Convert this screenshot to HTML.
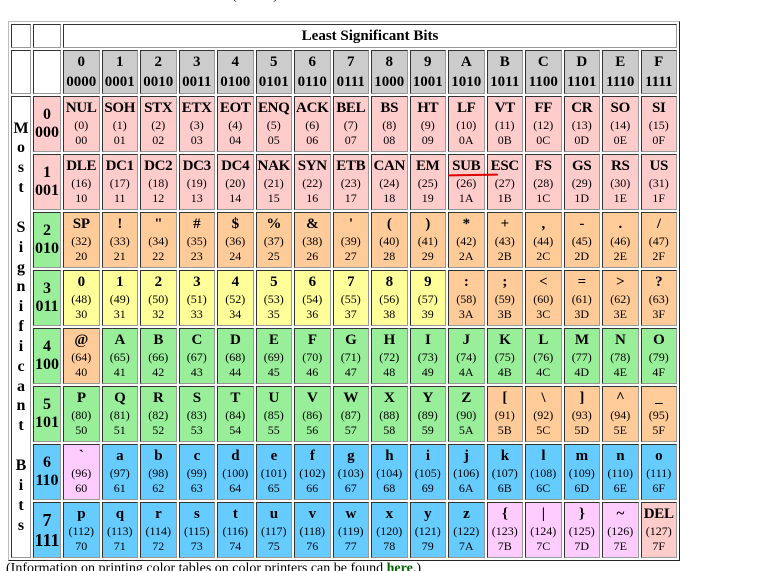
<!DOCTYPE html>
<html><head><meta charset="utf-8"><style>
html,body{margin:0;padding:0;background:#fff;width:769px;height:571px;overflow:hidden;position:relative;font-family:"Liberation Serif",serif;color:#000}
table{position:absolute;left:8px;top:21px;border-collapse:separate;border-spacing:2px;table-layout:fixed;border:1px solid;border-color:#bbb #222 #222 #bbb}
td{border:1px solid;border-color:#333 #999 #999 #333;padding:0;text-align:center;overflow:hidden;white-space:nowrap}
td.d{vertical-align:top;padding-top:2px;font-size:12px;line-height:15px;height:52px}
td.d b{display:block;font-size:15px;line-height:19px;letter-spacing:-0.3px}
td.h{background:#ccc;font-weight:bold;font-size:15px;line-height:20px;height:42px}
td.r{font-weight:bold;font-size:16px;line-height:18px}
td.m{font-weight:bold;font-size:16px;line-height:19.85px;vertical-align:middle}
.p{background:#ffcccc}.o{background:#fc9}.y{background:#ff9}.g{background:#99ee99}.b{background:#6cf}.l{background:#fcf}
#u{position:absolute;left:448px;top:174px;width:50px;height:2px;background:#d00;border-radius:1px;transform:rotate(-1deg)}
#f{position:absolute;left:6px;top:561px;font-size:14px;white-space:nowrap}
#f b{color:#060}
#t{position:absolute;left:232px;top:-12px;font-size:14px}
</style></head><body>
<div id="t">(ASCII)</div>
<table>
<colgroup><col style="width:20px"><col style="width:28px"><col span="16" style="width:36.5px"></colgroup>
<tr><td style="height:22px"></td><td></td><td colspan="16" style="font-weight:bold;font-size:15px">Least Significant Bits</td></tr>
<tr><td></td><td></td>
<td class="h">0<br>0000</td><td class="h">1<br>0001</td><td class="h">2<br>0010</td><td class="h">3<br>0011</td><td class="h">4<br>0100</td><td class="h">5<br>0101</td><td class="h">6<br>0110</td><td class="h">7<br>0111</td><td class="h">8<br>1000</td><td class="h">9<br>1001</td><td class="h">A<br>1010</td><td class="h">B<br>1011</td><td class="h">C<br>1100</td><td class="h">D<br>1101</td><td class="h">E<br>1110</td><td class="h">F<br>1111</td></tr>
<tr><td class="m" rowspan="8">M<br>o<br>s<br>t<br><br>S<br>i<br>g<br>n<br>i<br>f<br>i<br>c<br>a<br>n<br>t<br><br>B<br>i<br>t<br>s</td>
<td class="r p">0<br>000</td>
<td class="d p"><b>NUL</b>(0)<br>00</td><td class="d p"><b>SOH</b>(1)<br>01</td><td class="d p"><b>STX</b>(2)<br>02</td><td class="d p"><b>ETX</b>(3)<br>03</td><td class="d p"><b>EOT</b>(4)<br>04</td><td class="d p"><b>ENQ</b>(5)<br>05</td><td class="d p"><b>ACK</b>(6)<br>06</td><td class="d p"><b>BEL</b>(7)<br>07</td><td class="d p"><b>BS</b>(8)<br>08</td><td class="d p"><b>HT</b>(9)<br>09</td><td class="d p"><b>LF</b>(10)<br>0A</td><td class="d p"><b>VT</b>(11)<br>0B</td><td class="d p"><b>FF</b>(12)<br>0C</td><td class="d p"><b>CR</b>(13)<br>0D</td><td class="d p"><b>SO</b>(14)<br>0E</td><td class="d p"><b>SI</b>(15)<br>0F</td></tr>
<tr><td class="r p">1<br>001</td>
<td class="d p"><b>DLE</b>(16)<br>10</td><td class="d p"><b>DC1</b>(17)<br>11</td><td class="d p"><b>DC2</b>(18)<br>12</td><td class="d p"><b>DC3</b>(19)<br>13</td><td class="d p"><b>DC4</b>(20)<br>14</td><td class="d p"><b>NAK</b>(21)<br>15</td><td class="d p"><b>SYN</b>(22)<br>16</td><td class="d p"><b>ETB</b>(23)<br>17</td><td class="d p"><b>CAN</b>(24)<br>18</td><td class="d p"><b>EM</b>(25)<br>19</td><td class="d p"><b>SUB</b>(26)<br>1A</td><td class="d p"><b>ESC</b>(27)<br>1B</td><td class="d p"><b>FS</b>(28)<br>1C</td><td class="d p"><b>GS</b>(29)<br>1D</td><td class="d p"><b>RS</b>(30)<br>1E</td><td class="d p"><b>US</b>(31)<br>1F</td></tr>
<tr><td class="r g">2<br>010</td>
<td class="d o"><b>SP</b>(32)<br>20</td><td class="d o"><b>!</b>(33)<br>21</td><td class="d o"><b>"</b>(34)<br>22</td><td class="d o"><b>#</b>(35)<br>23</td><td class="d o"><b>$</b>(36)<br>24</td><td class="d o"><b>%</b>(37)<br>25</td><td class="d o"><b>&amp;</b>(38)<br>26</td><td class="d o"><b>'</b>(39)<br>27</td><td class="d o"><b>(</b>(40)<br>28</td><td class="d o"><b>)</b>(41)<br>29</td><td class="d o"><b>*</b>(42)<br>2A</td><td class="d o"><b>+</b>(43)<br>2B</td><td class="d o"><b>,</b>(44)<br>2C</td><td class="d o"><b>-</b>(45)<br>2D</td><td class="d o"><b>.</b>(46)<br>2E</td><td class="d o"><b>/</b>(47)<br>2F</td></tr>
<tr><td class="r g">3<br>011</td>
<td class="d y"><b>0</b>(48)<br>30</td><td class="d y"><b>1</b>(49)<br>31</td><td class="d y"><b>2</b>(50)<br>32</td><td class="d y"><b>3</b>(51)<br>33</td><td class="d y"><b>4</b>(52)<br>34</td><td class="d y"><b>5</b>(53)<br>35</td><td class="d y"><b>6</b>(54)<br>36</td><td class="d y"><b>7</b>(55)<br>37</td><td class="d y"><b>8</b>(56)<br>38</td><td class="d y"><b>9</b>(57)<br>39</td><td class="d o"><b>:</b>(58)<br>3A</td><td class="d o"><b>;</b>(59)<br>3B</td><td class="d o"><b>&lt;</b>(60)<br>3C</td><td class="d o"><b>=</b>(61)<br>3D</td><td class="d o"><b>&gt;</b>(62)<br>3E</td><td class="d o"><b>?</b>(63)<br>3F</td></tr>
<tr><td class="r g">4<br>100</td>
<td class="d o"><b>@</b>(64)<br>40</td><td class="d g"><b>A</b>(65)<br>41</td><td class="d g"><b>B</b>(66)<br>42</td><td class="d g"><b>C</b>(67)<br>43</td><td class="d g"><b>D</b>(68)<br>44</td><td class="d g"><b>E</b>(69)<br>45</td><td class="d g"><b>F</b>(70)<br>46</td><td class="d g"><b>G</b>(71)<br>47</td><td class="d g"><b>H</b>(72)<br>48</td><td class="d g"><b>I</b>(73)<br>49</td><td class="d g"><b>J</b>(74)<br>4A</td><td class="d g"><b>K</b>(75)<br>4B</td><td class="d g"><b>L</b>(76)<br>4C</td><td class="d g"><b>M</b>(77)<br>4D</td><td class="d g"><b>N</b>(78)<br>4E</td><td class="d g"><b>O</b>(79)<br>4F</td></tr>
<tr><td class="r g">5<br>101</td>
<td class="d g"><b>P</b>(80)<br>50</td><td class="d g"><b>Q</b>(81)<br>51</td><td class="d g"><b>R</b>(82)<br>52</td><td class="d g"><b>S</b>(83)<br>53</td><td class="d g"><b>T</b>(84)<br>54</td><td class="d g"><b>U</b>(85)<br>55</td><td class="d g"><b>V</b>(86)<br>56</td><td class="d g"><b>W</b>(87)<br>57</td><td class="d g"><b>X</b>(88)<br>58</td><td class="d g"><b>Y</b>(89)<br>59</td><td class="d g"><b>Z</b>(90)<br>5A</td><td class="d o"><b>[</b>(91)<br>5B</td><td class="d o"><b>\</b>(92)<br>5C</td><td class="d o"><b>]</b>(93)<br>5D</td><td class="d o"><b>^</b>(94)<br>5E</td><td class="d o"><b>_</b>(95)<br>5F</td></tr>
<tr><td class="r b">6<br>110</td>
<td class="d l"><b>`</b>(96)<br>60</td><td class="d b"><b>a</b>(97)<br>61</td><td class="d b"><b>b</b>(98)<br>62</td><td class="d b"><b>c</b>(99)<br>63</td><td class="d b"><b>d</b>(100)<br>64</td><td class="d b"><b>e</b>(101)<br>65</td><td class="d b"><b>f</b>(102)<br>66</td><td class="d b"><b>g</b>(103)<br>67</td><td class="d b"><b>h</b>(104)<br>68</td><td class="d b"><b>i</b>(105)<br>69</td><td class="d b"><b>j</b>(106)<br>6A</td><td class="d b"><b>k</b>(107)<br>6B</td><td class="d b"><b>l</b>(108)<br>6C</td><td class="d b"><b>m</b>(109)<br>6D</td><td class="d b"><b>n</b>(110)<br>6E</td><td class="d b"><b>o</b>(111)<br>6F</td></tr>
<tr><td class="r b" style="font-size:18px;line-height:20px">7<br>111</td>
<td class="d b"><b>p</b>(112)<br>70</td><td class="d b"><b>q</b>(113)<br>71</td><td class="d b"><b>r</b>(114)<br>72</td><td class="d b"><b>s</b>(115)<br>73</td><td class="d b"><b>t</b>(116)<br>74</td><td class="d b"><b>u</b>(117)<br>75</td><td class="d b"><b>v</b>(118)<br>76</td><td class="d b"><b>w</b>(119)<br>77</td><td class="d b"><b>x</b>(120)<br>78</td><td class="d b"><b>y</b>(121)<br>79</td><td class="d b"><b>z</b>(122)<br>7A</td><td class="d l"><b>{</b>(123)<br>7B</td><td class="d l"><b>|</b>(124)<br>7C</td><td class="d l"><b>}</b>(125)<br>7D</td><td class="d l"><b>~</b>(126)<br>7E</td><td class="d p"><b>DEL</b>(127)<br>7F</td></tr>
</table>
<div id="u"></div>
<div id="f">(Information on printing color tables on color printers can be found <b>here</b>.)</div>
</body></html>
